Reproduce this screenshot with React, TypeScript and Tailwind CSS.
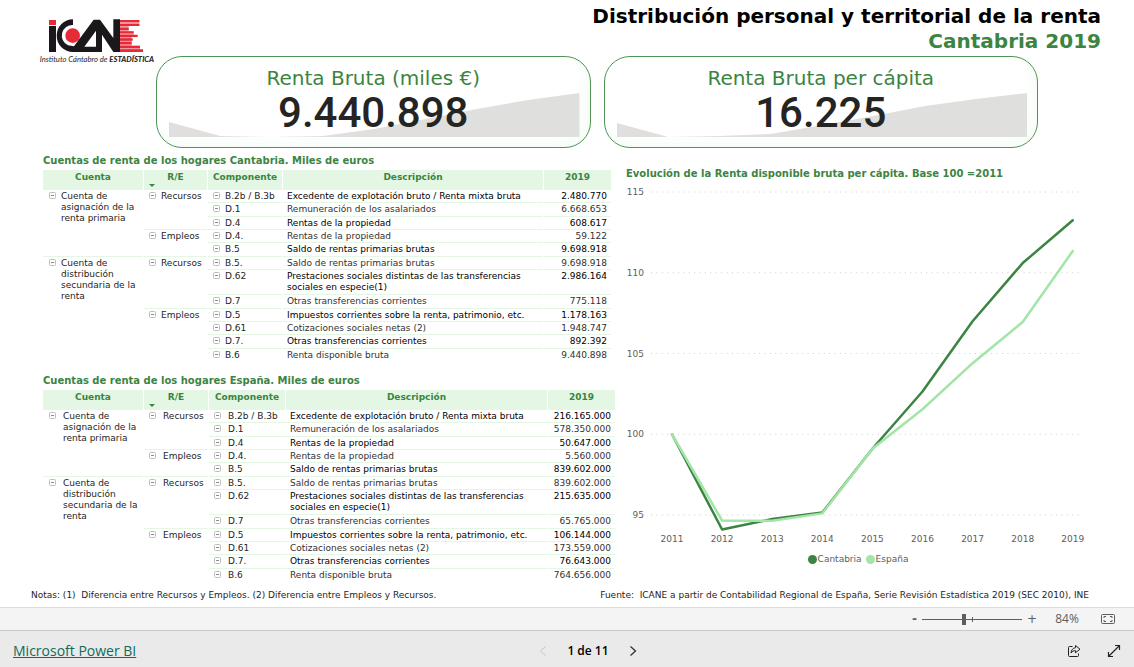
import { useState } from "react";
import { clsx } from "clsx";

interface Item {
  cuenta?: { label: string; span: number };
  tipo?: { label: string; span: number };
  code: string;
  desc: string;
  cantabria: string;
  espana: string;
}

const items: Item[] = [
  {
    cuenta: { label: "Cuenta de asignación de la renta primaria", span: 5 },
    tipo: { label: "Recursos", span: 3 },
    code: "B.2b / B.3b",
    desc: "Excedente de explotación bruto / Renta mixta bruta",
    cantabria: "2.480.770",
    espana: "216.165.000",
  },
  { code: "D.1", desc: "Remuneración de los asalariados", cantabria: "6.668.653", espana: "578.350.000" },
  { code: "D.4", desc: "Rentas de la propiedad", cantabria: "608.617", espana: "50.647.000" },
  {
    tipo: { label: "Empleos", span: 2 },
    code: "D.4.",
    desc: "Rentas de la propiedad",
    cantabria: "59.122",
    espana: "5.560.000",
  },
  { code: "B.5", desc: "Saldo de rentas primarias brutas", cantabria: "9.698.918", espana: "839.602.000" },
  {
    cuenta: { label: "Cuenta de distribución secundaria de la renta", span: 7 },
    tipo: { label: "Recursos", span: 3 },
    code: "B.5.",
    desc: "Saldo de rentas primarias brutas",
    cantabria: "9.698.918",
    espana: "839.602.000",
  },
  {
    code: "D.62",
    desc: "Prestaciones sociales distintas de las transferencias sociales en especie(1)",
    cantabria: "2.986.164",
    espana: "215.635.000",
  },
  { code: "D.7", desc: "Otras transferencias corrientes", cantabria: "775.118", espana: "65.765.000" },
  {
    tipo: { label: "Empleos", span: 4 },
    code: "D.5",
    desc: "Impuestos corrientes sobre la renta, patrimonio, etc.",
    cantabria: "1.178.163",
    espana: "106.144.000",
  },
  { code: "D.61", desc: "Cotizaciones sociales netas (2)", cantabria: "1.948.747", espana: "173.559.000" },
  { code: "D.7.", desc: "Otras transferencias corrientes", cantabria: "892.392", espana: "76.643.000" },
  { code: "B.6", desc: "Renta disponible bruta", cantabria: "9.440.898", espana: "764.656.000" },
];

function Logo() {
  return (
    <svg viewBox="0 0 360 162" className="w-[120px] h-[54px]" role="img" aria-label="ICANE">
      <g fill="#e52b38">
        <path d="M33 18h21v15H33z" />
        <circle cx="104" cy="65" r="22" />
        <path d="M246 18h58v6h-58zM246 30h58v6h-58zM246 41h26v7h-26zM246 52h41v6h-41zM246 62h53v7h-53zM246 73h38v7h-38zM246 84h35v7h-35zM246 95h60v7h-60zM246 106h69v8h-69z" />
        <path opacity=".5" d="M246 18h58v18h-58zM246 36h26v16h-26zM246 52h41v17h-41zM246 69h35v26h-35zM246 95h60v19h-60z" />
      </g>
      <g fill="#1b181c">
        <path d="M33 36h21v78H33z" />
        <path d="M105 16v17a32 32 0 0 0-15 61l18 3L167 17h19l40 55V16h20v98h-20l-34-52v52h-87a49 49 0 0 1 0-98zM174 50l-35 48h35z" fillRule="evenodd" />
      </g>
      <text x="5" y="143" fontSize="23" fontStyle="italic" fill="#2b282c" fontFamily="Lato, sans-serif">
        Instituto Cántabro de <tspan fontWeight="900">ESTADÍSTICA</tspan>
      </text>
    </svg>
  );
}

function KpiCard({ title, value, trend }: { title: string; value: string; trend: number[] }) {
  const step = 412 / (trend.length - 1);
  const line = trend.map((y, i) => `${i * step},${y}`).join(" ");

  return (
    <section className="relative h-[92px] rounded-[26px] border border-[#4f9455] shadow-[inset_-5px_-5px_12px_rgba(226,246,228,0.35)] text-center">
      <svg
        viewBox="0 0 412 44"
        preserveAspectRatio="none"
        className="absolute left-3 right-2.5 bottom-2.5 h-11 w-[calc(100%-22px)]"
        aria-hidden="true"
      >
        <polygon points={`0,44 ${line} 412,44`} fill="#dfdfde" />
      </svg>
      <div className="relative">
        <h2 className="pt-2 text-[20px] leading-[26px] text-[#3b8442]">{title}</h2>
        <p className="font-['Roboto',sans-serif] text-[42px] leading-[44px] font-medium text-[#252423]">{value}</p>
      </div>
    </section>
  );
}

function Toggle({ label }: { label: string }) {
  const [open, setOpen] = useState(true);
  return (
    <button
      type="button"
      aria-label={label}
      aria-expanded={open}
      onClick={() => setOpen(!open)}
      className="mt-px size-[7px] shrink-0 cursor-pointer"
    >
      <svg viewBox="0 0 7 7" className="block size-[7px]" fill="none" stroke="#bdbdbd">
        <rect x=".5" y=".5" width="6" height="6" rx="1" />
        <path d="M2 3.5h3" stroke="#8a8a8a" />
        {!open && <path d="M3.5 2v3" stroke="#8a8a8a" />}
      </svg>
    </button>
  );
}

interface CuentasTableProps {
  title: string;
  region: "cantabria" | "espana";
}

function CuentasTable({ title, region }: CuentasTableProps) {
  const wide = region === "espana";
  const cell = "border-t border-[#e3f7e4] pt-px align-top";
  const head = "p-0 pt-0.5 align-top";
  const group = clsx("flex", wide ? "gap-[7px]" : "gap-[5px]");

  return (
    <section>
      <h3 className="pl-px text-[10px] leading-[13px] font-bold text-[#3b8442]">{title}</h3>
      <div className={clsx("pt-[3px]", wide ? "pr-0.5" : "pr-1.5")}>
        <table className="w-full table-fixed border-separate border-spacing-x-px border-spacing-y-0 text-[9px] leading-[11px]">
          <colgroup>
            <col className="w-[100px]" />
            <col className={wide ? "w-[64px]" : "w-[63px]"} />
            <col className={wide ? "w-[76px]" : "w-[74px]"} />
            <col />
            <col className="w-[67px]" />
          </colgroup>
          <thead>
            <tr className="h-[19px] bg-[#e3f7e4] text-[#3b8442]">
              <th className={head}>Cuenta</th>
              <th className={clsx(head, "relative")}>
                R/E
                <span className="absolute bottom-0.5 left-[5px] border-x-[3px] border-t-[3px] border-x-transparent border-t-[#3b8442]" />
              </th>
              <th className={head}>Componente</th>
              <th className={head}>Descripción</th>
              <th className={head}>2019</th>
            </tr>
          </thead>
          <tbody>
            {items.map((item, i) => (
              <tr
                key={item.code}
                className={clsx(
                  "h-[13px] nth-[3n+2]:h-[14px] nth-7:h-[25px]",
                  i % 2 ? "text-[#33312f]" : "text-black",
                )}
              >
                {item.cuenta && (
                  <td rowSpan={item.cuenta.span} className={clsx(cell, "pl-1.5 text-[#252423]")}>
                    <div className={group}>
                      <Toggle label={item.cuenta.label} />
                      <span>{item.cuenta.label}</span>
                    </div>
                  </td>
                )}
                {item.tipo && (
                  <td rowSpan={item.tipo.span} className={clsx(cell, "pl-[5px] text-[#252423]")}>
                    <div className={group}>
                      <Toggle label={item.tipo.label} />
                      <span>{item.tipo.label}</span>
                    </div>
                  </td>
                )}
                <td className={clsx(cell, "pl-[5px] whitespace-nowrap text-[#252423]")}>
                  <div className={group}>
                    <Toggle label={item.code} />
                    <span>{item.code}</span>
                  </div>
                </td>
                <td className={clsx(cell, "pl-1 pr-4")}>{item.desc}</td>
                <td className={clsx(cell, "pr-1 text-right")}>{item[region]}</td>
              </tr>
            ))}
          </tbody>
        </table>
      </div>
    </section>
  );
}

const years = [2011, 2012, 2013, 2014, 2015, 2016, 2017, 2018, 2019];
const series = [
  { name: "Cantabria", color: "#3b8442", values: [100, 94.1, 94.75, 95.15, 99.1, 102.65, 107, 110.6, 113.25] },
  { name: "España", color: "#a3e4a7", values: [100, 94.65, 94.65, 95.1, 99.1, 101.55, 104.4, 106.95, 111.35] },
];
const ticks = [115, 110, 105, 100, 95];

const xOf = (i: number) => 54 + i * 50.1;
const yOf = (v: number) => 9 + (115 - v) * 16.15;

function EvolutionChart() {
  return (
    <section>
      <h3 className="pl-2 text-[10px] leading-[13px] font-bold text-[#3b8442]">
        Evolución de la Renta disponible bruta per cápita. Base 100 =2011
      </h3>
      <svg viewBox="0 0 484 364" className="mt-[3px] block w-full" role="img" aria-label="Evolución de la renta">
        {ticks.map((t) => (
          <g key={t}>
            <line x1="33" x2="465" y1={yOf(t)} y2={yOf(t)} stroke="#cfcfcf" strokeDasharray="1 4.4" />
            <text x="26" y={yOf(t) + 3} textAnchor="end" fontSize="9" fill="#605e5c">
              {t}
            </text>
          </g>
        ))}
        {years.map((y, i) => (
          <text key={y} x={xOf(i)} y="359" textAnchor="middle" fontSize="9" fill="#605e5c">
            {y}
          </text>
        ))}
        {series.map((s) => (
          <polyline
            key={s.name}
            points={s.values.map((v, i) => `${xOf(i)},${yOf(v)}`).join(" ")}
            fill="none"
            stroke={s.color}
            strokeWidth="2.5"
            strokeLinecap="round"
            strokeLinejoin="round"
          />
        ))}
      </svg>
      <ul className="flex justify-center gap-1 pt-1.5 pr-1 text-[9px] leading-[13px] text-[#605e5c]">
        {series.map((s) => (
          <li key={s.name} className="flex items-center gap-px">
            <span className="size-[9px] rounded-full" style={{ backgroundColor: s.color }} />
            {s.name}
          </li>
        ))}
      </ul>
    </section>
  );
}

function ZoomBar() {
  const [zoom, setZoom] = useState(84);
  return (
    <div className="flex h-[23px] items-center justify-end border-t border-[#dcdcdc] bg-[#f4f4f4] pr-[18px] text-[#605e5c]">
      <button type="button" aria-label="Alejar" onClick={() => setZoom(Math.max(10, zoom - 10))} className="px-[5px] text-[12px] font-bold">
        -
      </button>
      <div className="relative flex w-[100px] items-center">
        <span className="absolute left-1/2 h-[5px] w-px bg-[#605e5c]" />
        <input
          type="range"
          aria-label="Zoom"
          min="10"
          max="188"
          value={zoom}
          onChange={(e) => setZoom(Number(e.target.value))}
          className="h-3 w-full appearance-none bg-transparent [&::-webkit-slider-runnable-track]:h-px [&::-webkit-slider-runnable-track]:bg-[#605e5c] [&::-webkit-slider-thumb]:-mt-[5px] [&::-webkit-slider-thumb]:h-[11px] [&::-webkit-slider-thumb]:w-1 [&::-webkit-slider-thumb]:appearance-none [&::-webkit-slider-thumb]:bg-[#605e5c]"
        />
      </div>
      <button type="button" aria-label="Acercar" onClick={() => setZoom(Math.min(188, zoom + 10))} className="px-[5px] text-[12px]">
        +
      </button>
      <output className="w-[54px] pr-1 text-center font-['Open_Sans',sans-serif] text-[12px]">{zoom}%</output>
      <button type="button" aria-label="Ajustar a la página" className="ml-1">
        <svg viewBox="0 0 16 12" className="block h-3 w-4" fill="none" stroke="#605e5c">
          <rect x="1.5" y="1.5" width="13" height="9" rx="1" />
          <path d="M4 5V3.5h2M10 3.5h2V5M12 7v1.5h-2M6 8.5H4V7" />
        </svg>
      </button>
    </div>
  );
}

function BottomBar() {
  return (
    <footer className="grid h-[37px] grid-cols-[1fr_auto_1fr] items-center border-t border-[#c8c8c8] bg-[#eaeaea] pt-[3px] pr-[13px] pl-[13px] font-['Open_Sans',sans-serif]">
      <a href="#" className="justify-self-start text-[14px] leading-5 text-[#0f6b5c] underline">
        Microsoft Power BI
      </a>
      <nav className="ml-[42px] flex items-center gap-[18px] text-[12px] font-semibold text-black">
        <button type="button" aria-label="Página anterior" disabled>
          <svg viewBox="0 0 12 12" className="block size-3" fill="none" stroke="#c4c4c4">
            <path d="M8.500 1.500L3.500 6l5 4.500" />
          </svg>
        </button>
        <span>1 de 11</span>
        <button type="button" aria-label="Página siguiente">
          <svg viewBox="0 0 12 12" className="block size-3" fill="none" stroke="#333">
            <path d="M3.500 1.500L8.500 6l-5 4.500" strokeWidth="1.300" />
          </svg>
        </button>
      </nav>
      <div className="flex gap-[26px] justify-self-end">
        <button type="button" aria-label="Compartir">
          <svg viewBox="0 0 14 14" className="block size-3.5" fill="none" stroke="#222" strokeLinejoin="round">
            <path d="M5.500 2.500h-3a1 1 0 0 0-1 1v8a1 1 0 0 0 1 1h8a1 1 0 0 0 1-1V9.500" />
            <path d="M8.500 1.500l4.500 3.700-4.500 3.600V6.700C6.500 6.600 5 7.300 4 9c.2-3 1.800-4.900 4.500-5.300z" />
          </svg>
        </button>
        <button type="button" aria-label="Pantalla completa">
          <svg viewBox="0 0 14 14" className="block size-3.5" fill="none" stroke="#222" strokeWidth="1.200">
            <path d="M1.500 12.500l11-11M8 1.500h4.500V6M1.500 8v4.500H6" />
          </svg>
        </button>
      </div>
    </footer>
  );
}

export default function App() {
  return (
    <div className="bg-white font-['Verdana','DejaVu_Sans',sans-serif] text-[#252423]">
      <header className="flex">
        <div className="w-[156px] shrink-0 pt-[14px] pl-[38px]">
          <Logo />
        </div>
        <div className="min-w-0 flex-1">
          <h1 className="pt-1 pr-[33px] text-right text-[20px] leading-[25px] font-bold text-black">
            Distribución personal y territorial de la renta
            <span className="block text-[#3b8442]">Cantabria 2019</span>
          </h1>
          <div className="grid grid-cols-2 gap-[13px] pt-0.5 pr-24">
            <KpiCard
              title="Renta Bruta (miles €)"
              value="9.440.898"
              trend={[29, 43, 44, 43, 36, 26, 16, 7, 0]}
            />
            <KpiCard
              title="Renta Bruta per cápita"
              value="16.225"
              trend={[30, 44, 43, 41, 32, 23, 13, 6, 0]}
            />
          </div>
        </div>
      </header>

      <main className="grid grid-cols-[minmax(0,144fr)_minmax(0,121fr)] pt-1.5 pr-8 pl-[42px]">
        <div className="flex flex-col gap-[13px]">
          <CuentasTable title="Cuentas de renta de los hogares Cantabria. Miles de euros" region="cantabria" />
          <CuentasTable title="Cuentas de renta de los hogares España. Miles de euros" region="espana" />
        </div>
        <div className="pt-[13px]">
          <EvolutionChart />
        </div>
      </main>

      <div className="flex justify-between pt-2 pr-[45px] pb-[5px] pl-[31px] text-[9px] leading-[13px]">
        <p className="whitespace-pre">Notas: (1)  Diferencia entre Recursos y Empleos. (2) Diferencia entre Empleos y Recursos.</p>
        <p className="whitespace-pre">Fuente:  ICANE a partir de Contabilidad Regional de España, Serie Revisión Estadística 2019 (SEC 2010), INE</p>
      </div>

      <ZoomBar />
      <BottomBar />
    </div>
  );
}
